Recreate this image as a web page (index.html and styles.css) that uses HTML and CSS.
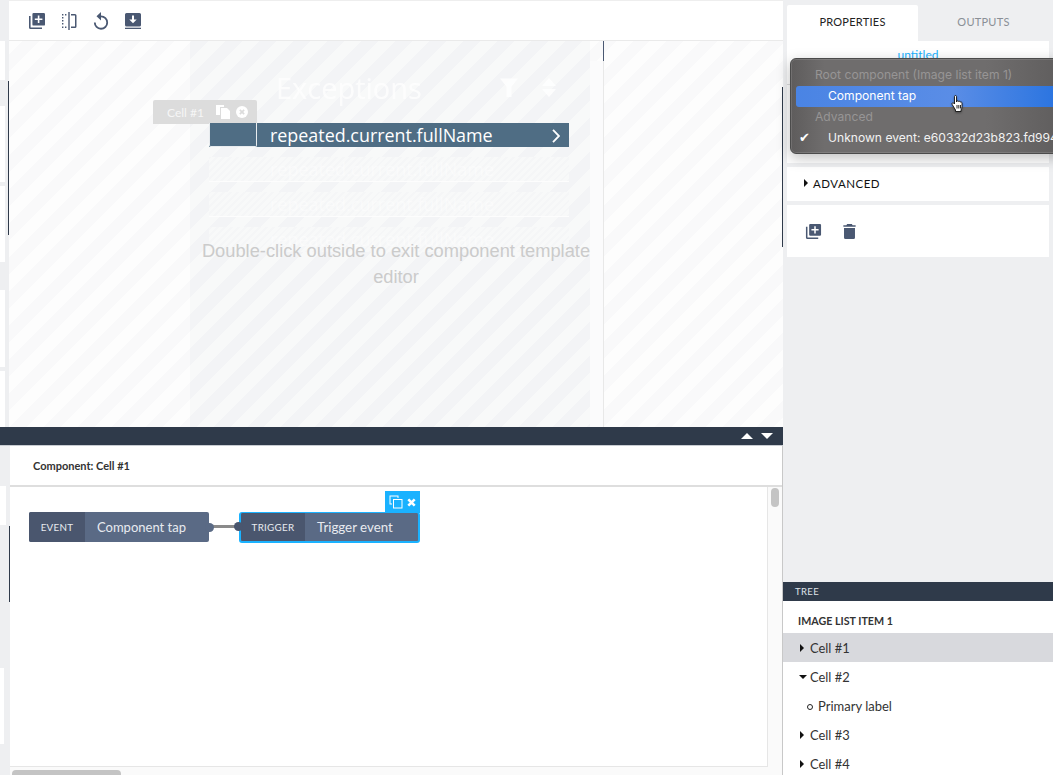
FILE: index.html
```html
<!DOCTYPE html>
<html lang="en">
<head>
    <meta charset="UTF-8">
    <title>Component template editor</title>
    <link rel="stylesheet" href="styles.css">
</head>
<body>
    <div class="app">
        <div class="main">
            <div class="upper">
                <div class="strip strip-top">
                    <div class="strip-card c1"></div>
                    <div class="strip-card c2"></div>
                    <div class="strip-card c3"></div>
                    <div class="strip-card c4"></div>
                    <div class="strip-card c5"></div>
                </div>
                <div class="work">
                    <div class="toolbar">
                        <svg class="tool" viewBox="0 0 18 18"><path d="M1 4h1.600v11.400H14V17H2.600A1.600 1.600 0 0 1 1 15.400z"/><path fill-rule="evenodd" d="M5.600 1h10.200A1.200 1.200 0 0 1 17 2.200v10.200a1.200 1.200 0 0 1-1.200 1.200H5.600a1.200 1.200 0 0 1-1.200-1.200V2.200A1.200 1.200 0 0 1 5.600 1zM9.800 3.400v3H6.800V8h3v3h1.600V8h3V6.400h-3v-3z"/></svg>
                        <svg class="tool" viewBox="0 0 18 18"><path d="M8.300 0h1.400v18H8.300z"/><path d="M11 2h4a1.500 1.500 0 0 1 1.500 1.500v11A1.500 1.500 0 0 1 15 16h-4v-1.400h4V3.400h-4z"/><path d="M2 2h1.400v1.400H2zM5 2h1.400v1.400H5zM2 5h1.400v1.400H2zM2 8h1.400v1.400H2zM2 11h1.400v1.400H2zM2 14.600h1.400V16H2zM5 14.600h1.400V16H5z"/></svg>
                        <svg class="tool" viewBox="0 0 18 18"><path d="M9 3.500V0L4.500 4.300 9 8.600V5.200a5.300 5.300 0 1 1-5.300 5.300H1.900A7.100 7.100 0 1 0 9 3.500z"/></svg>
                        <svg class="tool" viewBox="0 0 18 18"><path fill-rule="evenodd" d="M2.500 1h13A1.500 1.500 0 0 1 17 2.500V13a1.500 1.500 0 0 1-1.500 1.500h-13A1.500 1.500 0 0 1 1 13V2.500A1.500 1.500 0 0 1 2.500 1zM8 3.500V7.500H5.300L9 11.300l3.700-3.800H10V3.500z"/><path d="M1 15.700h16V17H1z"/></svg>
                    </div>
                    <div class="canvas">
                        <div class="phone"></div>
                        <div class="phone-edge"></div>
                        <div class="ghost-title">Exceptions</div>
                        <svg class="ghost-filter" viewBox="0 0 18 18"><path d="M0 0h18l-6.500 8v11h-5V8z"/></svg>
                        <svg class="ghost-sort" viewBox="0 0 14 19"><path d="M7 0l7 8H0zM7 19l-7-8h14z"/></svg>
                        <div class="ghost-row r1">repeated.current.fullName</div>
                        <div class="ghost-row r2">repeated.current.fullName</div>
                        <div class="ghost-row r3">repeated.current.fullName</div>
                        <div class="cell-tag">
                            <span>Cell #1</span>
                            <svg class="tag-copy" viewBox="0 0 14 14"><path d="M0 0h8v2H4v8H0z"/><path d="M5 3h6l3 3v8H5z"/></svg>
                            <svg class="tag-close" viewBox="0 0 14 14"><circle cx="7" cy="7" r="7"/><path class="tag-x" d="M4.500 4.500l5 5M9.500 4.500l-5 5"/></svg>
                        </div>
                        <div class="sel-row">
                            <div class="sel-cell"></div>
                            <span class="sel-text">repeated.current.fullName</span>
                            <svg class="sel-arrow" viewBox="0 0 8 14"><path d="M1 .8L7 7l-6 6.200"/></svg>
                        </div>
                        <p class="hint">Double-click outside to exit component template editor</p>
                    </div>
                </div>
            </div>
            <div class="bar">
                <span class="arr-up"></span>
                <span class="arr-down"></span>
            </div>
            <div class="lower">
                <div class="strip strip-bottom">
                    <div class="strip-card c6"></div>
                    <div class="strip-card c7"></div>
                </div>
                <div class="panel">
                    <div class="panel-head">Component: Cell #1</div>
                    <div class="panel-body">
                        <div class="flow">
                            <div class="node">
                                <span class="node-type">EVENT</span>
                                <span class="node-name">Component tap</span>
                                <i class="notch notch-r"></i>
                            </div>
                            <div class="wire"></div>
                            <div class="node node-sel">
                                <div class="node-actions">
                                    <svg viewBox="0 0 14 14"><path d="M.5.5h9v2.500h-1V1.500h-7v7H3v1H.5z"/><path d="M4 4h9.500v9.500H4zM5 5v7.500h7.500V5z" fill-rule="evenodd"/></svg>
                                    <svg viewBox="0 0 12 12"><path class="act-x" d="M2.500 2.500l7 7M9.500 2.500l-7 7"/></svg>
                                </div>
                                <span class="node-type type-trigger">TRIGGER</span>
                                <span class="node-name name-trigger">Trigger event</span>
                                <i class="notch notch-l"></i>
                            </div>
                        </div>
                        <div class="scroll-v"><div class="thumb-v"></div></div>
                    </div>
                    <div class="scroll-h"><div class="thumb-h"></div></div>
                </div>
            </div>
        </div>
        <div class="side">
            <div class="tabs">
                <div class="tab tab-on">PROPERTIES</div>
                <div class="tab">OUTPUTS</div>
            </div>
            <div class="card card-props">
                <a class="untitled">untitled</a>
                <div class="card-rule"></div>
            </div>
            <div class="card card-adv"><span class="tri-right"></span>ADVANCED</div>
            <div class="card card-actions">
                <svg class="tool" viewBox="0 0 18 18"><path d="M1 4h1.600v11.400H14V17H2.600A1.600 1.600 0 0 1 1 15.400z"/><path fill-rule="evenodd" d="M5.600 1h10.200A1.200 1.200 0 0 1 17 2.200v10.200a1.200 1.200 0 0 1-1.200 1.200H5.600a1.200 1.200 0 0 1-1.200-1.200V2.200A1.200 1.200 0 0 1 5.600 1zM9.800 3.400v3H6.800V8h3v3h1.600V8h3V6.400h-3v-3z"/></svg>
                <svg class="tool" viewBox="0 0 18 18"><path d="M6.500 1h5l.8 1.300H15.500V4h-13V2.300h3.200zM3.200 5.200h11.600V15.500A1.500 1.500 0 0 1 13.300 17H4.700a1.500 1.500 0 0 1-1.500-1.500z"/></svg>
            </div>
            <div class="side-fill"></div>
            <div class="tree">
                <div class="tree-bar">TREE</div>
                <div class="tree-title">IMAGE LIST ITEM 1</div>
                <div class="tree-row tree-sel"><span class="tri-right"></span>Cell #1</div>
                <div class="tree-row"><span class="tri-down"></span>Cell #2</div>
                <div class="tree-row tree-child"><span class="dot"></span>Primary label</div>
                <div class="tree-row"><span class="tri-right"></span>Cell #3</div>
                <div class="tree-row"><span class="tri-right"></span>Cell #4</div>
            </div>
        </div>
        <div class="menu">
            <div class="menu-item menu-off">Root component (Image list item 1)</div>
            <div class="menu-item menu-on">Component tap</div>
            <div class="menu-item menu-off">Advanced</div>
            <div class="menu-item menu-check"><span class="check">✔</span>Unknown event: e60332d23b823.fd994</div>
        </div>
        <svg class="hand" viewBox="0 0 14 18"><path d="M4 1.500c0-1.300 2-1.300 2 0v5.500l.5-1c1-.5 1.500 0 1.600.5.800-.5 1.500-.1 1.600.6.800-.4 1.800 0 1.800 1v3.400c0 1.500-.5 2.400-1 3.500v1.500H5v-1.500L1.700 9.500c-.8-1.200.6-2.300 1.600-1.300L4 9z"/><path class="hand-line" d="M6.500 10v3.500M8.300 10v3.500M10 10v3.500"/></svg>
    </div>
</body>
</html>
```

FILE: styles.css
```css
* {
    box-sizing: border-box;
}

html, body {
    margin: 0;
    height: 100%;
    overflow: hidden;
}

body {
    font-family: "Lato", "Noto Sans", sans-serif;
    background-color: #eeeff1;
    color: #222;
}

.app {
    position: relative;
    display: flex;
    width: 1053px;
    height: 775px;
    overflow: hidden;
}

.main {
    width: 783px;
    display: flex;
    flex-direction: column;
}

.upper {
    display: flex;
    height: 427px;
}

.strip {
    flex: none;
    background-color: #eeeff1;
}

.strip-top {
    width: 9px;
}

.strip-bottom {
    width: 10px;
    padding-top: 40px;
}

.strip-card {
    background-color: #fff;
    width: 5px;
}

.c1 { height: 39px; margin-top: 41px; }
.c2 { height: 76px; margin-top: 26px; }
.c3 { height: 76px; margin-top: 4px; }
.c4 { height: 77px; margin-top: 28px; }
.c5 { height: 56px; margin-top: 4px; }
.c6 { height: 39px; width: 6px; }
.c7 { height: 76px; width: 4px; margin-top: 143px; }

.work {
    flex: 1;
    display: flex;
    flex-direction: column;
    min-width: 0;
    position: relative;
}

.work::before {
    content: "";
    position: absolute;
    left: -1px;
    top: 81px;
    width: 1px;
    height: 154px;
    background-color: #2f3a4a;
}

.work::after {
    content: "";
    position: absolute;
    right: 0;
    top: 87px;
    width: 1px;
    height: 160px;
    background-color: #2f3a4a;
}

.toolbar {
    height: 41px;
    padding: 1px 0 0 19px;
    display: flex;
    align-items: center;
    gap: 14px;
    background-color: #fff;
    border-top: 1px solid #eee;
    border-bottom: 1px solid #eaeaea;
}

.tool {
    width: 18px;
    height: 18px;
    fill: #4a5872;
    flex: none;
}

.canvas {
    flex: 1;
    position: relative;
    overflow: hidden;
    background: repeating-linear-gradient(-45deg, #fdfdfd 0 12px, #f9f9fa 12px 24px) fixed;
}

.phone {
    position: absolute;
    left: 181px;
    top: 0;
    width: 400px;
    height: 100%;
    background: repeating-linear-gradient(-45deg, #f8f9f9 0 12px, #f3f4f6 12px 24px) fixed;
}

.phone-edge {
    position: absolute;
    left: 581px;
    top: 20px;
    width: 14px;
    height: 100%;
    background-color: #fbfbfc;
    border-right: 1px solid #e8e8e8;
}

.phone-edge::before {
    content: "";
    position: absolute;
    right: -1px;
    top: -21px;
    width: 1px;
    height: 21px;
    background-color: #4a5872;
}

.ghost-title {
    position: absolute;
    left: 267px;
    top: 27px;
    font-family: "Open Sans", sans-serif;
    font-size: 29px;
    line-height: 40px;
    color: #fff;
    opacity: 0.75;
}

.ghost-filter {
    position: absolute;
    left: 491px;
    top: 37px;
    width: 18px;
    height: 19px;
    fill: #fff;
    opacity: 0.85;
}

.ghost-sort {
    position: absolute;
    left: 533px;
    top: 37px;
    width: 14px;
    height: 19px;
    fill: #fff;
    opacity: 0.85;
}

.ghost-row {
    position: absolute;
    left: 200px;
    width: 360px;
    height: 25px;
    padding-left: 61px;
    font-family: "Open Sans", sans-serif;
    font-size: 18px;
    line-height: 24px;
    color: rgba(255, 255, 255, 0.45);
    background: repeating-linear-gradient(-45deg, #f5f6f7 0 2px, #f8f9f9 2px 5px);
    border-bottom: 1px solid #fdfdfd;
}

.r1 { top: 116px; }
.r2 { top: 151px; }
.r3 { top: 186px; border-bottom: 0; }

.cell-tag {
    position: absolute;
    left: 144px;
    top: 59px;
    width: 104px;
    height: 24px;
    padding-left: 14px;
    display: flex;
    align-items: center;
    background-color: #dcdcdc;
    border-radius: 2px 2px 0 0;
    color: #f6f6f6;
    font-size: 12px;
}

.tag-copy {
    width: 14px;
    height: 14px;
    margin-left: 12px;
    fill: #fff;
}

.tag-close {
    width: 12px;
    height: 12px;
    margin-left: 6px;
    fill: #fff;
}

.tag-x {
    fill: none;
    stroke: #dcdcdc;
    stroke-width: 2;
}

.sel-row {
    position: absolute;
    left: 200px;
    top: 82px;
    width: 360px;
    height: 24px;
    display: flex;
    align-items: center;
    background-color: #4f6d84;
    color: #fff;
}

.sel-cell {
    width: 48px;
    height: 24px;
    border: 1px solid #e8ecef;
    border-width: 0 1px 1px 1px;
    border-radius: 0 0 2px 2px;
}

.sel-text {
    margin-left: 13px;
    font-family: "Open Sans", sans-serif;
    font-size: 17.900px;
    line-height: 24px;
    white-space: nowrap;
}

.sel-arrow {
    position: absolute;
    left: 343px;
    top: 6px;
    width: 8px;
    height: 14px;
    fill: none;
    stroke: #fff;
    stroke-width: 1.800;
}

.hint {
    position: absolute;
    left: 184px;
    top: 197px;
    width: 406px;
    margin: 0;
    font-family: "Liberation Sans", sans-serif;
    font-size: 18.300px;
    line-height: 26px;
    text-align: center;
    color: #cbcbcb;
}

.bar {
    height: 19px;
    flex: none;
    display: flex;
    justify-content: flex-end;
    align-items: center;
    gap: 8px;
    padding: 0 10px 0 0;
    background-color: #2f3a4a;
    border-bottom: 1px solid #c8ccd2;
}

.arr-up {
    width: 0;
    height: 0;
    border: 6px solid transparent;
    border-top: 0;
    border-bottom: 6px solid #fff;
}

.arr-down {
    width: 0;
    height: 0;
    border: 6px solid transparent;
    border-bottom: 0;
    border-top: 6px solid #fff;
}

.lower {
    flex: 1;
    display: flex;
    min-height: 0;
    position: relative;
}

.lower::before {
    content: "";
    position: absolute;
    left: 9px;
    top: 80px;
    width: 1px;
    height: 76px;
    background-color: #2f3a4a;
}

.panel {
    flex: 1;
    min-width: 0;
    display: flex;
    flex-direction: column;
    background-color: #fff;
    border-right: 1px solid #c8c8c8;
}

.panel-head {
    height: 41px;
    padding: 0 0 0 23px;
    line-height: 40px;
    font-size: 11px;
    font-weight: 700;
    color: #333;
    border-bottom: 2px solid #dedede;
}

.panel-body {
    flex: 1;
    display: flex;
    min-height: 0;
}

.flow {
    flex: 1;
    padding: 25px 0 0 19px;
    display: flex;
    align-items: flex-start;
    border-right: 1px solid #e6e6e6;
    border-bottom: 1px solid #e6e6e6;
}

.node {
    position: relative;
    display: flex;
    width: 180px;
    height: 30px;
    border-radius: 2px;
    background-color: #5a6a85;
    color: #e8ebf0;
    line-height: 30px;
}

.node-type {
    width: 56px;
    text-align: center;
    font-size: 9.800px;
    letter-spacing: 0.3px;
    background-color: #4a566e;
    border-radius: 2px 0 0 2px;
}

.node-name {
    padding-left: 12px;
    font-size: 13px;
}

.notch {
    position: absolute;
    top: 11px;
    width: 9px;
    height: 9px;
    border-radius: 50%;
    background-color: #4a566e;
}

.notch-r {
    right: -5px;
    background-color: #5a6a85;
}

.wire {
    width: 30px;
    height: 3px;
    margin-top: 13px;
    background-color: #8a8a8a;
}

.node-sel {
    width: 181px;
    height: 31px;
    line-height: 29px;
    border: 2px solid #1ab2ff;
    border-top-width: 1px;
    border-radius: 3px;
}

.type-trigger {
    width: 64px;
}

.name-trigger {
    font-size: 13.300px;
}

.node-sel .notch-l {
    left: -7px;
    top: 9px;
}

.node-actions {
    position: absolute;
    right: -2px;
    top: -22px;
    width: 35px;
    height: 22px;
    display: flex;
    align-items: center;
    justify-content: space-between;
    padding: 0 3px 0 4px;
    background-color: #1ab2ff;
}

.node-actions svg:first-child {
    width: 14px;
    height: 14px;
    fill: #fff;
}

.node-actions svg:last-child {
    width: 11px;
    height: 11px;
}

.act-x {
    fill: none;
    stroke: #fff;
    stroke-width: 2.800;
}

.scroll-v {
    width: 14px;
    flex: none;
    padding: 1px 0 0 3px;
    background-color: #fafafa;
}

.thumb-v {
    width: 8px;
    height: 19px;
    border-radius: 4px;
    background-color: #c4c4c4;
}

.scroll-h {
    height: 8px;
    flex: none;
    padding: 3px 0 0 2px;
    background-color: #fafafa;
}

.thumb-h {
    width: 109px;
    height: 5px;
    border-radius: 4px 4px 0 0;
    background-color: #c4c4c4;
}

.side {
    flex: 1;
    display: flex;
    flex-direction: column;
    min-width: 0;
}

.tabs {
    display: flex;
    padding: 5px 0 0 4px;
    height: 41px;
    flex: none;
}

.tab {
    width: 131px;
    height: 36px;
    line-height: 33px;
    text-align: center;
    font-size: 11px;
    letter-spacing: 0.25px;
    color: #8a8f96;
}

.tab-on {
    background-color: #fff;
    color: #222;
    border-radius: 2px 2px 0 0;
}

.card {
    flex: none;
    margin: 0 4px 4px;
    background-color: #fff;
}

.card-props {
    height: 122px;
    text-align: center;
    font-size: 12px;
    line-height: 27px;
}

.card-rule {
    height: 1px;
    margin-top: 16px;
    background-color: #ddd;
}

.untitled {
    color: #1ab2ff;
    text-decoration: underline;
}

.card-adv {
    height: 34px;
    line-height: 34px;
    padding-left: 17px;
    font-size: 11.500px;
    letter-spacing: 0.5px;
    color: #111;
}

.card-adv .tri-right {
    margin-right: 5px;
}

.card-actions {
    height: 52px;
    display: flex;
    align-items: center;
    gap: 19px;
    padding: 0 0 0 18px;
}

.card-actions .tool {
    width: 17px;
    height: 17px;
}

.side-fill {
    flex: 1;
}

.tree {
    flex: none;
    height: 193px;
    background-color: #fff;
}

.tree-bar {
    height: 19px;
    padding-left: 12px;
    line-height: 19px;
    font-size: 9.500px;
    letter-spacing: 0.4px;
    color: #dfe3e8;
    background-color: #2f3a4a;
}

.tree-title {
    height: 32px;
    padding-left: 15px;
    line-height: 40px;
    font-size: 10.700px;
    font-weight: 700;
    color: #333;
}

.tree-row {
    height: 29px;
    padding-left: 17px;
    line-height: 30px;
    font-size: 12.900px;
    color: #333;
}

.tree-sel {
    background-color: #d8d9dd;
}

.tree-child {
    padding-left: 24px;
    font-size: 13px;
}

.tri-right {
    display: inline-block;
    width: 0;
    height: 0;
    margin-right: 6px;
    vertical-align: 1px;
    border-left: 4px solid #111;
    border-top: 4px solid transparent;
    border-bottom: 4px solid transparent;
}

.tri-down {
    display: inline-block;
    width: 0;
    height: 0;
    margin-left: -1px;
    margin-right: 3px;
    vertical-align: 3px;
    border-top: 4px solid #111;
    border-left: 4px solid transparent;
    border-right: 4px solid transparent;
}

.dot {
    display: inline-block;
    width: 6px;
    height: 6px;
    margin-right: 5px;
    vertical-align: 1px;
    border: 1px solid #222;
    border-radius: 50%;
}

.menu {
    position: absolute;
    left: 790px;
    top: 58px;
    width: 280px;
    height: 96px;
    padding: 6px 5px;
    border: 1px solid #4b4b4b;
    border-radius: 6px;
    background: linear-gradient(90deg, #5e5c5c, #6f6d6d 12%, #6f6d6d 70%, #5e5c5c);
    box-shadow: 0 4px 14px rgba(0, 0, 0, 0.25), inset 0 0 0 1px rgba(255, 255, 255, 0.12);
    font-family: "Inter", "Noto Sans", sans-serif;
    font-size: 12.100px;
    white-space: nowrap;
    color: #f2f2f2;
}

.menu-item {
    height: 21px;
    line-height: 20px;
    padding-left: 32px;
    position: relative;
}

.menu-off {
    padding-left: 19px;
    color: #979595;
}

.menu-on {
    width: 262px;
    border-radius: 3px 0 0 3px;
    background: linear-gradient(90deg, #4a84e4, #5a8de6 60%, #2a74e0);
    color: #fff;
}

.check {
    position: absolute;
    left: 3px;
    top: 0;
    font-family: "DejaVu Sans", sans-serif;
    font-size: 13px;
    color: #fff;
}

.hand {
    position: absolute;
    left: 950px;
    top: 95px;
    width: 15px;
    height: 18px;
    fill: #fff;
    stroke: #111;
    stroke-width: 0.900;
    filter: drop-shadow(0 1px 1px rgba(0, 0, 0, 0.35));
}

.hand-line {
    fill: none;
}
```
